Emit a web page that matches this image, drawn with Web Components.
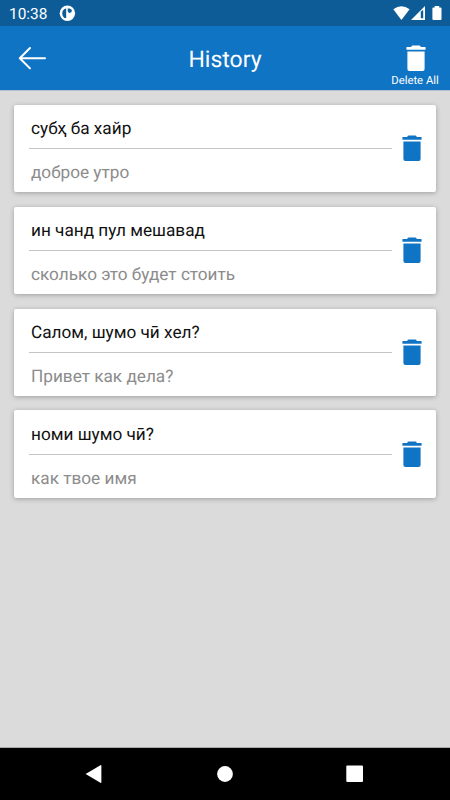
<!DOCTYPE html>
<html lang="tg">
<head>
<meta charset="utf-8">
<title>History</title>
<style>
html,body{margin:0;height:100%}
body{font-family:Roboto,"Noto Sans",sans-serif;overflow:hidden;text-rendering:geometricPrecision}
</style>
</head>
<body>
<history-screen></history-screen>
<script>
const define=(name,html)=>customElements.define(name,class extends HTMLElement{
  constructor(){
    super();
    const t=document.createElement('template');
    t.innerHTML=html;
    this.attachShadow({mode:'open'}).append(t.content.cloneNode(true));
  }
});

define('trash-icon',`
<style>:host{display:block;width:20px;height:27px}svg{display:block}</style>
<svg width="20" height="27" viewBox="0 0 20 27" fill="currentColor"><path d="M.8 2H5.2Q5.6.6 6.8.6H13.2Q14.4.6 14.8 2H19.2Q19.6 2 19.6 2.4V4.3Q19.6 4.7 19.2 4.7H.8Q.4 4.7.4 4.3V2.4Q.4 2 .8 2ZM1.4 6.4H18.6V24Q18.6 26 16.6 26H3.4Q1.4 26 1.4 24Z"/></svg>`);

define('status-bar',`
<style>
:host{display:flex;align-items:center;height:26px;box-sizing:border-box;background:#0d5c97;color:#fff;padding:0 7px 0 9px;font-size:15.4px}
.time{line-height:26px;padding-top:1px;width:50px;white-space:nowrap}
.grow{flex:1}
svg{display:block}
</style>
<span class="time">10:38</span>
<svg width="17" height="26" viewBox="0 0 17 26"><circle cx="8.4" cy="13.3" r="7.7" fill="#fff"/><path d="M7.2 8.6V18H5.4Q3.2 16.6 3.2 13.5Q3.2 9.4 7.2 8.6ZM8.7 8.6H10.4Q12.9 8.9 12.9 10.8T10.6 12.9Q8.7 12.8 8.7 11Z" fill="#0d5c97"/></svg>
<span class="grow"></span>
<svg width="51" height="26" viewBox="392 0 51 26"><path d="M393.3 9.3Q401.4 3.1 409.6 9.3L401.4 20Z" fill="#fff"/><path d="M425 6V20H411Z" fill="#fff"/><path d="M420.8 11.6L423.2 10V18.3H420.8Z" fill="#0d5c97"/><path d="M434.7 6H439.2V7.5H440.6Q441.5 7.5 441.5 8.4V19Q441.5 20 440.5 20H433.4Q432.4 20 432.4 19V8.4Q432.4 7.5 433.3 7.5H434.7Z" fill="#fff"/></svg>`);

define('app-bar',`
<style>
:host{display:grid;grid-template-columns:70px 1fr 70px;height:65px;background:#1074c5;color:#fff;border-bottom:1px solid #b4bfd0;box-sizing:border-box}
.back{display:block;margin:19px 0 0 18px}
h1{font:400 23px/68px Roboto,sans-serif;margin:0;text-align:center}
.del{display:flex;flex-direction:column;align-items:center;padding:19px 0 0}
.del trash-icon{margin-left:2px}
.del span{font-size:11.3px;line-height:14px;margin-top:2px;white-space:nowrap}
</style>
<svg class="back" width="30" height="26" viewBox="0 0 30 26" fill="none" stroke="#fff" stroke-width="2" stroke-linecap="round" stroke-linejoin="round"><path d="M12 3L1.8 13.2L12 23.4M2 13.2H27"/></svg>
<h1><slot></slot></h1>
<div class="del"><trash-icon></trash-icon><span>Delete All</span></div>`);

define('history-card',`
<style>
:host{display:grid;grid-template-columns:363px 1fr;height:87.5px;box-sizing:border-box;padding:.15px 0 0 15px;background:#fff;border-radius:2px;box-shadow:0 1px 5px rgba(0,0,0,.28)}
.a,.b{padding-left:2px;font-size:17.2px;white-space:nowrap}
.a{height:43px;line-height:48px;color:#111;border-bottom:1px solid #c4c4c4}
.b{line-height:49px;color:#8c8c8c}
trash-icon{color:#1074c5;margin:30px 0 0 10px}
</style>
<div><div class="a"><slot name="source"></slot></div><div class="b"><slot name="result"></slot></div></div>
<trash-icon></trash-icon>`);

define('nav-bar',`
<style>
:host{display:flex;justify-content:space-between;align-items:center;height:52px;background:#000;padding:0 86px 0 85px;box-sizing:border-box}
svg{display:block}
</style>
<svg width="17" height="20" viewBox="0 0 17 20" fill="#fff"><path d="M.6 10L15.4 1.2Q16.4 .8 16.4 2V18Q16.4 19.2 15.4 18.8Z"/></svg>
<svg width="18" height="18" fill="#fff"><circle cx="10" cy="9" r="7.9"/></svg>
<svg width="18" height="18" fill="#fff"><rect x=".3" y=".5" width="16.7" height="16.5" rx="1"/></svg>`);

define('history-screen',`
<style>
:host{display:flex;flex-direction:column;height:800px;width:450px;background:#dbdbdb}
main{flex:1;min-height:0;display:flex;flex-direction:column;gap:14.4px;padding:13.8px 14px;box-sizing:border-box;border-bottom:1px solid #aaa}
</style>
<status-bar></status-bar>
<app-bar>History</app-bar>
<main>
<history-card><span slot="source">субҳ ба хайр</span><span slot="result">доброе утро</span></history-card>
<history-card><span slot="source">ин чанд пул мешавад</span><span slot="result">сколько это будет стоить</span></history-card>
<history-card><span slot="source">Салом, шумо чӣ хел?</span><span slot="result">Привет как дела?</span></history-card>
<history-card><span slot="source">номи шумо чӣ?</span><span slot="result">как твое имя</span></history-card>
</main>
<nav-bar></nav-bar>`);
</script>
</body>
</html>
